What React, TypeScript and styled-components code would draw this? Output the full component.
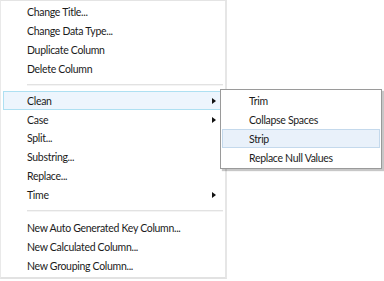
import React from 'react';
import styled, { createGlobalStyle } from 'styled-components';

const GlobalStyle = createGlobalStyle`
  html, body {
    margin: 0;
    padding: 0;
    background: #ffffff;
  }
  body {
    font-family: Lato, "Open Sans", sans-serif;
    font-size: 10.5px;
    letter-spacing: -0.3px;
    color: #1b1b1b;
  }
`;

const Stage = styled.div`
  width: 384px;
  height: 281px;
  overflow: hidden;
  background: #ffffff;
`;

const Menu = styled.div`
  position: relative;
  box-sizing: border-box;
  width: 227px;
  height: 279px;
  padding: 2px;
  background: #ffffff;
  border-top: 1px solid #e4e4e4;
  border-left: 1px solid #e9e9e9;
  border-right: 2px solid #e6e6e6;
  border-bottom: 2px solid #e2e2e2;
  display: flex;
  flex-direction: column;
`;

const Item = styled.div<{ $active?: boolean }>`
  position: relative;
  box-sizing: border-box;
  height: 19px;
  display: flex;
  align-items: center;
  padding-left: 23px;
  padding-right: 6px;
  white-space: nowrap;
  border: 1px solid ${(p) => (p.$active ? '#aee0f2' : 'transparent')};
  background: ${(p) => (p.$active ? '#edf5fd' : 'transparent')};
`;

const Label = styled.span`
  flex: 1;
`;

const Arrow = styled.span`
  width: 0;
  height: 0;
  border-top: 3px solid transparent;
  border-bottom: 3px solid transparent;
  border-left: 4px solid #111;
`;

const Separator = styled.div<{ $h: number }>`
  height: ${(p) => p.$h}px;
  display: flex;
  align-items: center;
  padding-left: 24px;
  &::after {
    content: "";
    flex: 1;
    height: 1px;
    background: #e2e2e2;
    border-bottom: 1px solid #f4f4f4;
  }
`;

const Submenu = styled.div`
  position: absolute;
  top: -3px;
  left: 100%;
  margin-left: -2px;
  box-sizing: border-box;
  width: 162px;
  padding: 1px;
  background: #ffffff;
  border: 1px solid #9a9a9a;
  box-shadow: 2px 2px 1px rgba(0, 0, 0, 0.22);
  display: flex;
  flex-direction: column;
  z-index: 2;
`;

const SubItem = styled.div<{ $active?: boolean }>`
  box-sizing: border-box;
  height: 19px;
  display: flex;
  align-items: center;
  padding-left: 26px;
  white-space: nowrap;
  border: 1px solid ${(p) => (p.$active ? '#c4d9ec' : 'transparent')};
  background: ${(p) => (p.$active ? '#e9f1fa' : 'transparent')};
`;

const top = ['Change Title...', 'Change Data Type...', 'Duplicate Column', 'Delete Column'];
const mid: { label: string; sub?: boolean }[] = [
  { label: 'Case', sub: true },
  { label: 'Split...' },
  { label: 'Substring...' },
  { label: 'Replace...' },
  { label: 'Time', sub: true },
];
const bottom = ['New Auto Generated Key Column...', 'New Calculated Column...', 'New Grouping Column...'];
const clean = ['Trim', 'Collapse Spaces', 'Strip', 'Replace Null Values'];

export default function App() {
  return (
    <Stage>
      <GlobalStyle />
      <Menu>
        {top.map((t) => (
          <Item key={t}>
            <Label>{t}</Label>
          </Item>
        ))}
        <Separator $h={13} />
        <Item $active>
          <Label>Clean</Label>
          <Arrow />
          <Submenu>
            {clean.map((c) => (
              <SubItem key={c} $active={c === 'Strip'}>
                {c}
              </SubItem>
            ))}
          </Submenu>
        </Item>
        {mid.map((m) => (
          <Item key={m.label}>
            <Label>{m.label}</Label>
            {m.sub && <Arrow />}
          </Item>
        ))}
        <Separator $h={14} />
        {bottom.map((b) => (
          <Item key={b}>
            <Label>{b}</Label>
          </Item>
        ))}
      </Menu>
    </Stage>
  );
}
